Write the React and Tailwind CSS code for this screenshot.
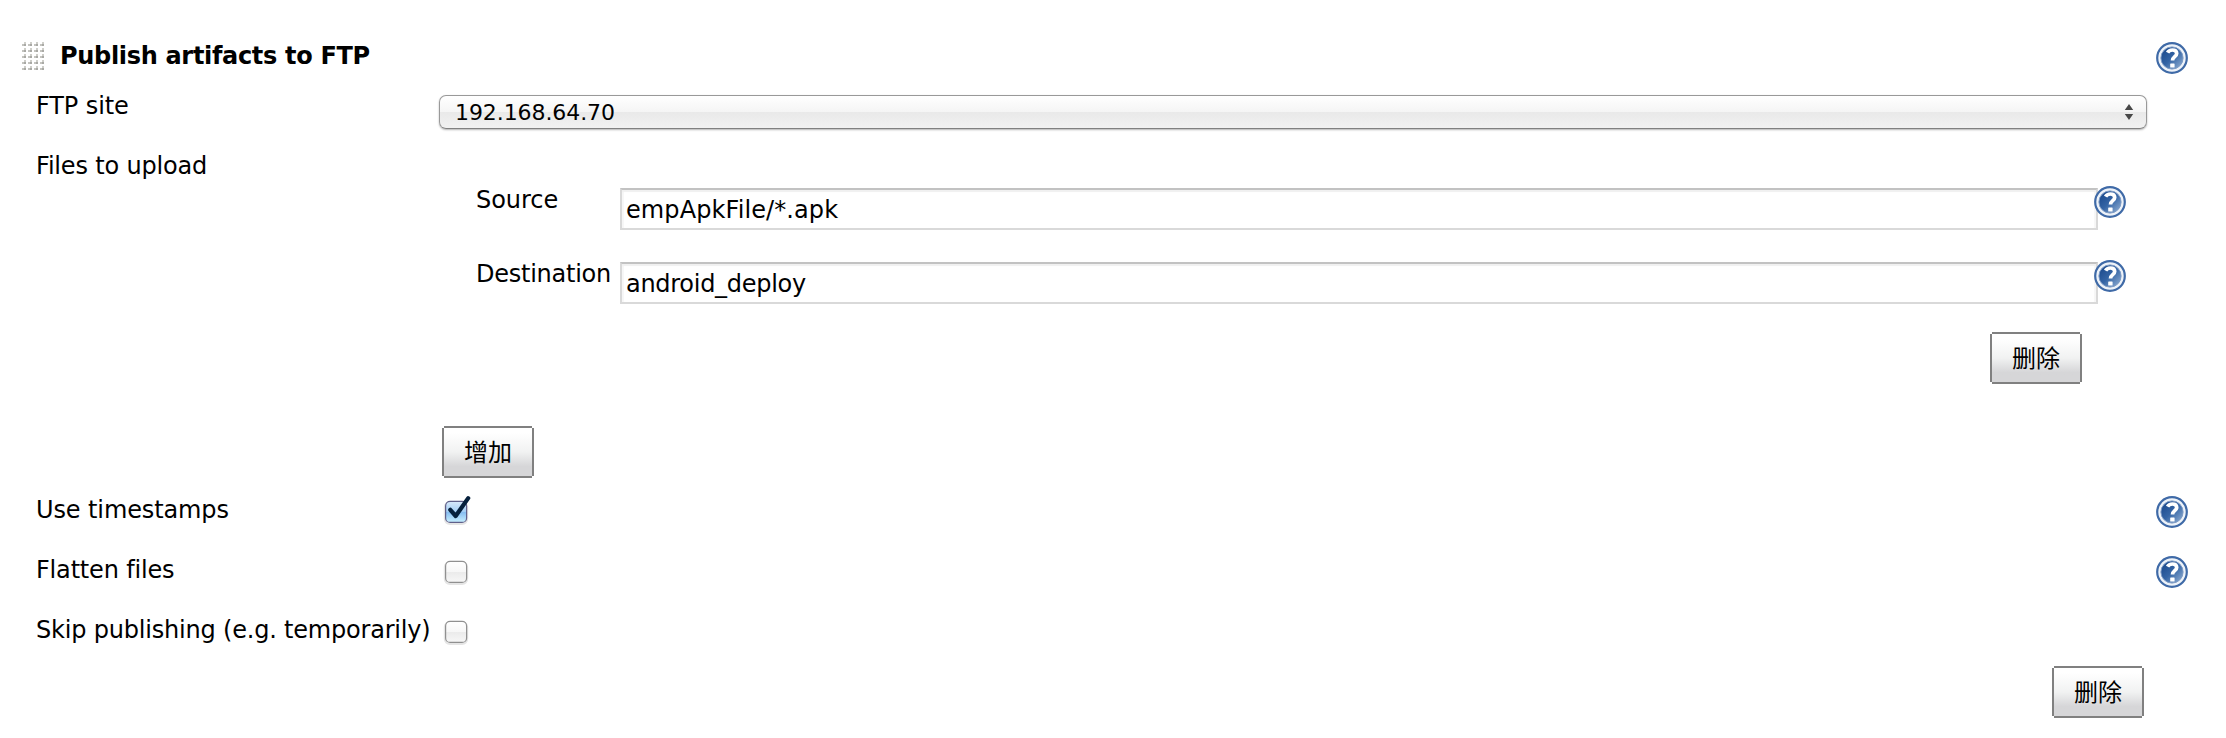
import React from "react";

function HelpIcon() {
  return (
    <svg viewBox="0 0 32 32" className="block size-8 shrink-0" aria-hidden="true">
      <defs>
        <linearGradient id="helpFill" x1="0" y1="0" x2="1" y2="1">
          <stop offset="0.1" stopColor="#1b4a8d" />
          <stop offset="0.5" stopColor="#3565a5" />
          <stop offset="0.9" stopColor="#84a5cd" />
        </linearGradient>
      </defs>
      <circle cx="16" cy="16" r="14.8" fill="#eef3f9" stroke="#3f6aa7" strokeWidth="2.2" />
      <circle cx="16" cy="16" r="11.1" fill="url(#helpFill)" stroke="#7f9cc6" strokeWidth="1" />
      <path
        d="M11.6 10.6C12.6 8.6 14.2 8 16.4 8c2.8 0 4.3 1.4 4.3 3.5 0 3.2-4.2 3.3-4.2 7.1"
        fill="none"
        stroke="#fff"
        strokeWidth="3.7"
      />
      <rect x="14.2" y="21.4" width="4.4" height="4.2" rx="0.6" fill="#fff" />
    </svg>
  );
}

function DragHandle() {
  const cols = [0, 6, 12, 18];
  const rows = [0, 6, 12, 18, 24];
  return (
    <svg viewBox="0 0 22 28" className="mt-0.5 block h-7 w-[22px]" shapeRendering="crispEdges" aria-hidden="true">
      {rows.map((y) =>
        cols.map((x) => (
          <g key={`${x}-${y}`}>
            <rect x={x} y={y + 2} width="2" height="2" fill="#c4c4bf" />
            <rect x={x + 2} y={y} width="2" height="2" fill="#cfcfca" />
            <rect x={x + 2} y={y + 2} width="2" height="2" fill="#a9a9a5" />
          </g>
        ))
      )}
    </svg>
  );
}

function PushButton({ children }) {
  return (
    <button
      type="button"
      className="relative flex h-[52px] w-[92px] items-center justify-center bg-[#808080] pb-[3px] font-['Noto_Sans_CJK_SC',sans-serif] text-2xl leading-[30px] before:absolute before:inset-[2px] before:bg-linear-to-b before:from-white before:from-10% before:via-[#f1f2f2] before:via-50% before:to-[#d6d6d8] before:to-80% [clip-path:polygon(2px_0,90px_0,90px_2px,92px_2px,92px_50px,90px_50px,90px_52px,2px_52px,2px_50px,0_50px,0_2px,2px_2px)]"
    >
      <span className="relative">{children}</span>
    </button>
  );
}

function Checkbox({ checked = false }) {
  return (
    <svg viewBox="0 0 32 32" className="block size-8" aria-hidden="true">
      <defs>
        <linearGradient id="boxOff" x1="0" y1="0" x2="0" y2="1">
          <stop offset="0" stopColor="#fff" />
          <stop offset="0.48" stopColor="#f7f7f7" />
          <stop offset="0.52" stopColor="#ebebeb" />
          <stop offset="1" stopColor="#f7f7f7" />
        </linearGradient>
        <linearGradient id="boxOn" x1="0" y1="0" x2="0" y2="1">
          <stop offset="0" stopColor="#d9eafa" />
          <stop offset="0.48" stopColor="#a5cff5" />
          <stop offset="0.52" stopColor="#86bdf0" />
          <stop offset="1" stopColor="#c8f0ff" />
        </linearGradient>
      </defs>
      <rect x="4.8" y="8" width="22.4" height="22" rx="5" fill="none" stroke="#000" strokeOpacity="0.1" strokeWidth="2" />
      <rect
        x="5.6"
        y="7.4"
        width="21"
        height="21"
        rx="4.5"
        fill={checked ? "url(#boxOn)" : "url(#boxOff)"}
        stroke={checked ? "#60608a" : "#909090"}
        strokeWidth="1.2"
      />
      {checked && (
        <path
          d="M10.3 15.8L15.7 22L28.2 4.1"
          fill="none"
          stroke="#06203c"
          strokeWidth="4.2"
          strokeLinecap="round"
          strokeLinejoin="round"
        />
      )}
    </svg>
  );
}

function TextField({ value }) {
  return (
    <div className="h-[42px] w-[1478px] border-2 border-[#d9d9d9] border-t-[#c2c2c2] bg-white pt-[5px] pl-1 leading-[30px] shadow-[inset_0_2px_1px_#f0f0f0,inset_2px_0_1px_#f7f7f7,inset_-2px_0_1px_#f7f7f7]">
      {value}
    </div>
  );
}

function FileRow({ label, labelClass, value, valueClass }) {
  return (
    <div className="flex h-[74px] items-start">
      <div className={`w-36 shrink-0 leading-[30px] ${labelClass}`}>{label}</div>
      <div className={`mt-[3px] ${valueClass}`}>
        <TextField value={value} />
      </div>
      <div className="relative -ml-1 mt-px">
        <HelpIcon />
      </div>
    </div>
  );
}

function CheckRow({ label, labelClass, checked, help }) {
  return (
    <div className="flex h-[60px] items-start">
      <div className={`w-[404px] shrink-0 pt-px leading-[30px] whitespace-nowrap ${labelClass}`}>{label}</div>
      <Checkbox checked={checked} />
      {help && (
        <div className="mt-0.5 mr-[38px] ml-auto">
          <HelpIcon />
        </div>
      )}
    </div>
  );
}

export default function App() {
  return (
    <main className="h-[738px] w-[2226px] overflow-hidden bg-white pt-10 font-['DejaVu_Sans','Noto_Sans_CJK_SC',sans-serif] text-2xl text-black">
      <header className="flex h-[50px] items-start pr-[38px] pl-[22px]">
        <DragHandle />
        <h2 className="ml-4 pt-px leading-[30px] font-bold tracking-[-0.318px]">Publish artifacts to FTP</h2>
        <div className="mt-0.5 ml-auto">
          <HelpIcon />
        </div>
      </header>

      <div className="pl-9">
        <div className="flex h-[60px] items-start">
          <div className="w-[403px] shrink-0 pt-px leading-[30px] tracking-[-0.1px]">FTP site</div>
          <div className="mt-[5px] flex h-[34px] w-[1708px] items-center justify-between rounded-[7px] border border-[#999] border-b-[#808080] pr-[13px] pl-[15px] shadow-[0_1px_2px_rgba(0,0,0,0.3)] [background-image:linear-gradient(#fff,#f5f5f5_49%,#e9e9e9_51%,#f1f1f1)]">
            <span className="pt-0.5 text-[22px] leading-[30px] tracking-[-0.08px]">192.168.64.70</span>
            <svg viewBox="0 0 8 16" className="h-4 w-2 overflow-visible" aria-hidden="true">
              <path d="M4 0L8.2 6H-.2ZM4 16L8.2 10H-.2Z" fill="#484848" />
            </svg>
          </div>
        </div>

        <div className="flex h-[344px] items-start">
          <div className="w-[404px] shrink-0 pt-px leading-[30px] tracking-[-0.18px]">Files to upload</div>
          <div className="flex flex-col">
            <div className="pt-[35px] pl-9">
              <FileRow
                label="Source"
                labelClass="tracking-[-0.03px]"
                value="empApkFile/*.apk"
                valueClass="tracking-[0.097px]"
              />
              <FileRow
                label="Destination"
                labelClass="tracking-[-0.25px]"
                value="android_deploy"
                valueClass="tracking-[-0.28px]"
              />
            </div>
            <div className="-mt-px flex h-[94px] justify-end pr-[44px]">
              <PushButton>删除</PushButton>
            </div>
            <div className="pl-0.5">
              <PushButton>增加</PushButton>
            </div>
          </div>
        </div>

        <CheckRow label="Use timestamps" labelClass="tracking-[-0.11px]" checked help />
        <CheckRow label="Flatten files" labelClass="tracking-[-0.18px]" help />
        <CheckRow label="Skip publishing (e.g. temporarily)" labelClass="tracking-[-0.198px]" />
      </div>

      <footer className="-mt-2 flex justify-end pr-[82px]">
        <PushButton>删除</PushButton>
      </footer>
    </main>
  );
}
